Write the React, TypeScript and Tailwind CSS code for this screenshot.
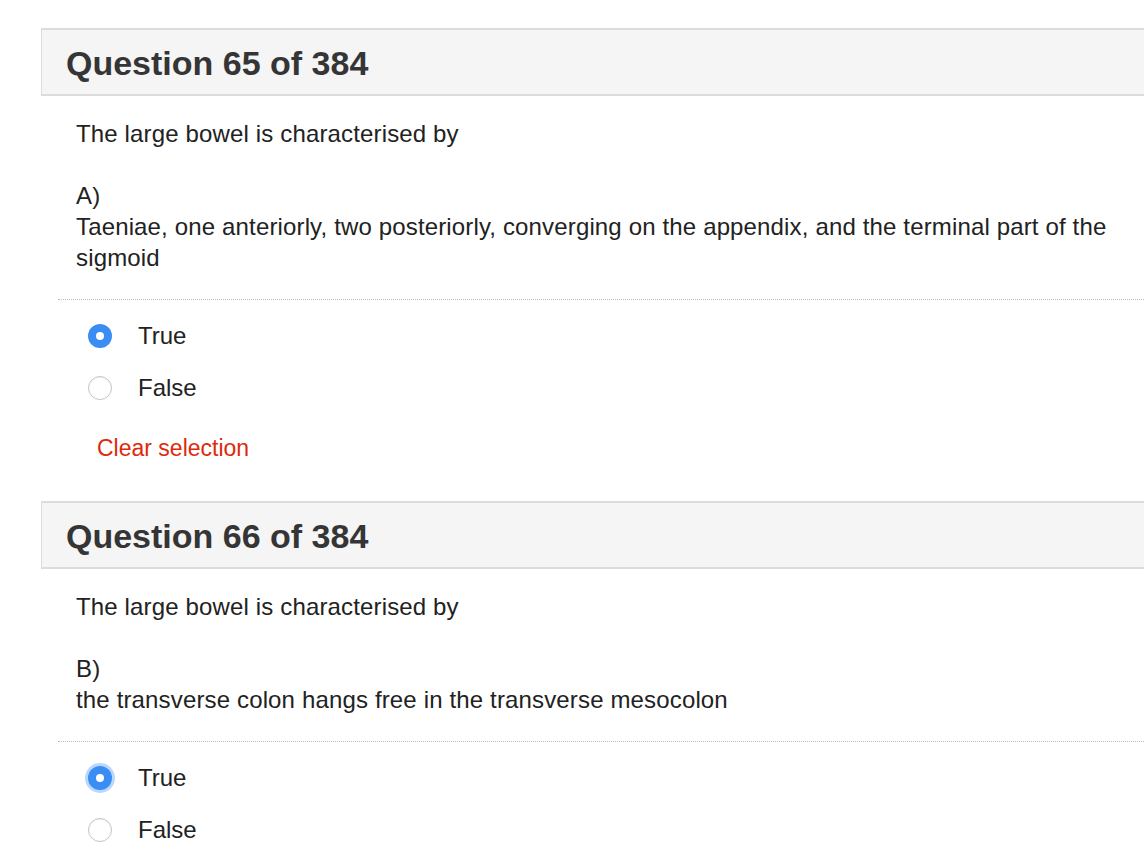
import React from "react";

type Q = {
  num: number;
  stem: string;
  letter: string;
  text: string;
  selected: "true" | "false" | null;
  focused?: boolean;
};

const questions: Q[] = [
  {
    num: 65,
    stem: "The large bowel is characterised by",
    letter: "A)",
    text: "Taeniae, one anteriorly, two posteriorly, converging on the appendix, and the terminal part of the sigmoid",
    selected: "true",
  },
  {
    num: 66,
    stem: "The large bowel is characterised by",
    letter: "B)",
    text: "the transverse colon hangs free in the transverse mesocolon",
    selected: "true",
    focused: true,
  },
];

function Radio({ checked, focused }: { checked: boolean; focused?: boolean }) {
  if (checked) {
    return (
      <span
        className={
          "flex h-[24px] w-[24px] items-center justify-center rounded-full bg-[#3a8ef3] " +
          (focused ? "shadow-[0_0_0_3px_rgba(58,142,243,0.35)]" : "")
        }
      >
        <span className="h-[8px] w-[8px] rounded-full bg-white" />
      </span>
    );
  }
  return (
    <span className="h-[24px] w-[24px] rounded-full border border-[#c4c4c4] bg-white shadow-[inset_0_1px_1px_rgba(0,0,0,0.06)]" />
  );
}

function Question({ q }: { q: Q }) {
  return (
    <div>
      <div className="flex h-[68px] w-[1300px] items-center border-2 border-l border-[#dcdcdc] bg-[#f5f5f5] pl-[24px] pt-[2px]">
        <h2 className="text-[34px] font-bold leading-none text-[#353535]">
          Question {q.num} of 384
        </h2>
      </div>
      <div className="pl-[35px] pt-[22px] text-[24px] leading-[31px] tracking-[0.15px] text-[#222]">
        <p className="w-[1060px]">{q.stem}</p>
        <p className="mt-[31px] w-[1060px]">{q.letter}</p>
        <p className="w-[1060px]">{q.text}</p>
      </div>
      <div className="ml-[17px] mt-[26px] w-[1200px] border-t border-dotted border-[#bdbdbd]" />
      <div className="pt-[10px] pl-[47px] text-[24px] text-[#222]">
        {(["true", "false"] as const).map((v) => (
          <label key={v} className="flex h-[52px] items-center">
            <Radio checked={q.selected === v} focused={q.focused && q.selected === v} />
            <span className="ml-[26px] leading-none">{v === "true" ? "True" : "False"}</span>
          </label>
        ))}
      </div>
      <div className="mt-[22px] mb-[41px] pl-[56px] text-[23px] leading-[24px] text-[#dd2a0c]">
        Clear selection
      </div>
    </div>
  );
}

export default function App() {
  return (
    <div className="h-[866px] w-[1144px] overflow-hidden bg-white font-['Liberation_Sans',Arial,sans-serif]">
      <div className="pl-[41px] pt-[28px]">
        {questions.map((q) => (
          <Question key={q.num} q={q} />
        ))}
      </div>
    </div>
  );
}
